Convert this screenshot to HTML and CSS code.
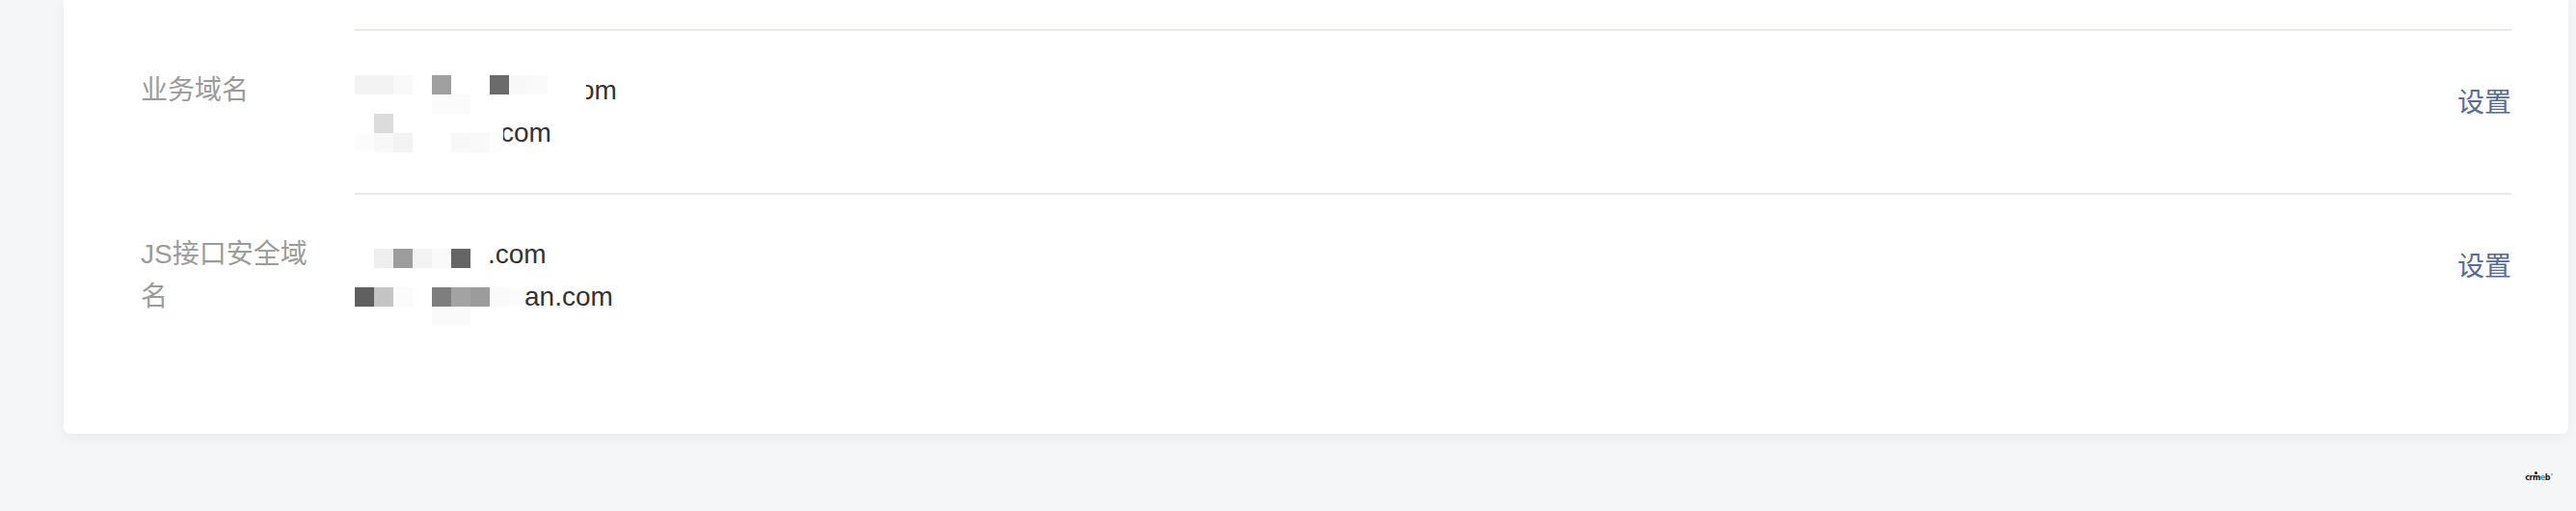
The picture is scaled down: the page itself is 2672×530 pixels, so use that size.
FILE: index.html
```html
<!DOCTYPE html>
<html lang="zh-CN">
<head>
<meta charset="utf-8">
<title>域名设置</title>
<link rel="stylesheet" href="styles.css">
</head>
<body>
<div class="page">
  <div class="card">
    <div class="row">
      <div class="label">业务域名</div>
      <div class="main">
        <div class="value">
          <div class="line ind-1">om</div>
          <div class="line ind-2">com</div>
          <div class="mosaic mosaic-a">
            <div class="mrow"><i class="kf3"></i><i class="kf3"></i><i class="kf9"></i><i></i><i class="ka0"></i><i></i><i></i><i class="k6b"></i><i class="kf8"></i><i class="kfa"></i><i></i><i></i></div>
            <div class="mrow"><i></i><i></i><i></i><i></i><i class="kfb"></i><i class="kfb"></i><i></i><i></i><i></i><i></i><i></i><i></i></div>
            <div class="mrow"><i></i><i class="kdc"></i><i></i><i></i><i></i><i></i><i></i><i class="part"></i></div>
            <div class="mrow"><i class="kfc"></i><i class="kf8"></i><i class="kf3"></i><i></i><i></i><i class="kf8"></i><i class="kf9"></i><i class="part kfd"></i></div>
          </div>
        </div>
        <a class="action">设置</a>
      </div>
    </div>
    <div class="row">
      <div class="label">JS接口安全域名</div>
      <div class="main">
        <div class="value">
          <div class="line ind-3">.com</div>
          <div class="line ind-4">an.com</div>
          <div class="mosaic mosaic-b">
            <div class="mrow"><i></i><i class="kef"></i><i class="k9d"></i><i class="kf3"></i><i class="kfa"></i><i class="k65"></i><i></i></div>
            <div class="mrow"><i></i><i></i><i></i><i></i><i></i><i></i><i></i></div>
            <div class="mrow"><i class="k5f"></i><i class="kc4"></i><i class="kfb"></i><i></i><i class="k7e"></i><i class="ka3"></i><i class="k9c"></i><i class="kfa"></i><i class="part-l kfc"></i></div>
            <div class="mrow"><i></i><i></i><i></i><i></i><i class="kfa"></i><i class="kfa"></i></div>
          </div>
        </div>
        <a class="action">设置</a>
      </div>
    </div>
  </div>
  <div class="footer">
    <span class="logo">cr<span class="logo-m">m</span><span class="logo-e">e</span>b<span class="logo-r"></span></span>
  </div>
</div>
</body>
</html>
```

FILE: styles.css
```css
html, body {
  margin: 0;
  padding: 0;
}

body {
  background: #f5f6f8;
  height: 530px;
  overflow: hidden;
  font-family: "Liberation Sans", "Noto Sans CJK SC", sans-serif;
}

.page {
  padding: 0 8px 0 66px;
}

.card {
  background: #ffffff;
  border-radius: 0 0 6px 6px;
  box-shadow: 0 3px 14px rgba(0, 0, 0, 0.05);
  padding: 30px 59px 80px 80px;
}

.row {
  display: flex;
}

.label {
  flex-shrink: 0;
  width: 188px;
  margin-right: 34px;
  padding-top: 42px;
  font-size: 28px;
  line-height: 44px;
  color: #9b9b9b;
}

.main {
  flex: 1;
  display: flex;
  justify-content: space-between;
  align-items: flex-start;
  border-top: 2px solid #e5e9ee;
  padding: 40px 0;
}

.value {
  position: relative;
}

.line {
  height: 44px;
  font-size: 28px;
  line-height: 44px;
  color: #333333;
  white-space: nowrap;
}

.ind-1 { padding-left: 233px; }
.ind-2 { padding-left: 151px; }
.ind-3 { padding-left: 138px; }
.ind-4 { padding-left: 176px; }

.mosaic {
  position: absolute;
  left: 0;
}

.mosaic-a { top: 6px; }
.mosaic-b { top: 16px; }

.mrow {
  display: flex;
  height: 20px;
}

.mrow i {
  display: block;
  width: 20px;
  height: 20px;
  background: #ffffff;
}

.mrow i.part { width: 14px; }
.mrow i.part-l { width: 17px; }

.mrow i.k5f { background: #5f5f5f; }
.mrow i.k65 { background: #656565; }
.mrow i.k6b { background: #6b6b6b; }
.mrow i.k7e { background: #7e7e7e; }
.mrow i.k9c { background: #9c9c9c; }
.mrow i.k9d { background: #9d9d9d; }
.mrow i.ka0 { background: #a0a0a0; }
.mrow i.ka3 { background: #a3a3a3; }
.mrow i.kc4 { background: #c4c4c4; }
.mrow i.kdc { background: #dcdcdc; }
.mrow i.kef { background: #efefef; }
.mrow i.kf3 { background: #f3f3f3; }
.mrow i.kf8 { background: #f8f8f8; }
.mrow i.kf9 { background: #f9f9f9; }
.mrow i.kfa { background: #fafafa; }
.mrow i.kfb { background: #fbfbfb; }
.mrow i.kfc { background: #fcfcfc; }
.mrow i.kfd { background: #fdfdfd; }

.action {
  margin-top: 13px;
  font-size: 28px;
  line-height: 44px;
  color: #576b95;
  cursor: pointer;
  white-space: nowrap;
}

.footer {
  display: flex;
  justify-content: flex-end;
  padding: 41px 19px 0 0;
}

.logo {
  position: relative;
  font-family: "DejaVu Sans", sans-serif;
  font-weight: bold;
  font-size: 8px;
  line-height: 10px;
  letter-spacing: -0.5px;
  color: #1a1a1a;
}

.logo-m {
  position: relative;
}

.logo-m::before {
  content: "";
  position: absolute;
  left: 2px;
  top: -2px;
  width: 3px;
  height: 3px;
  border-radius: 50%;
  background: #1a1a1a;
}

.logo-e {
  color: #1e9be9;
}

.logo-r {
  position: absolute;
  right: -3px;
  top: 0;
  width: 2px;
  height: 2px;
  border-radius: 50%;
  background: #9a9a9a;
}
```
